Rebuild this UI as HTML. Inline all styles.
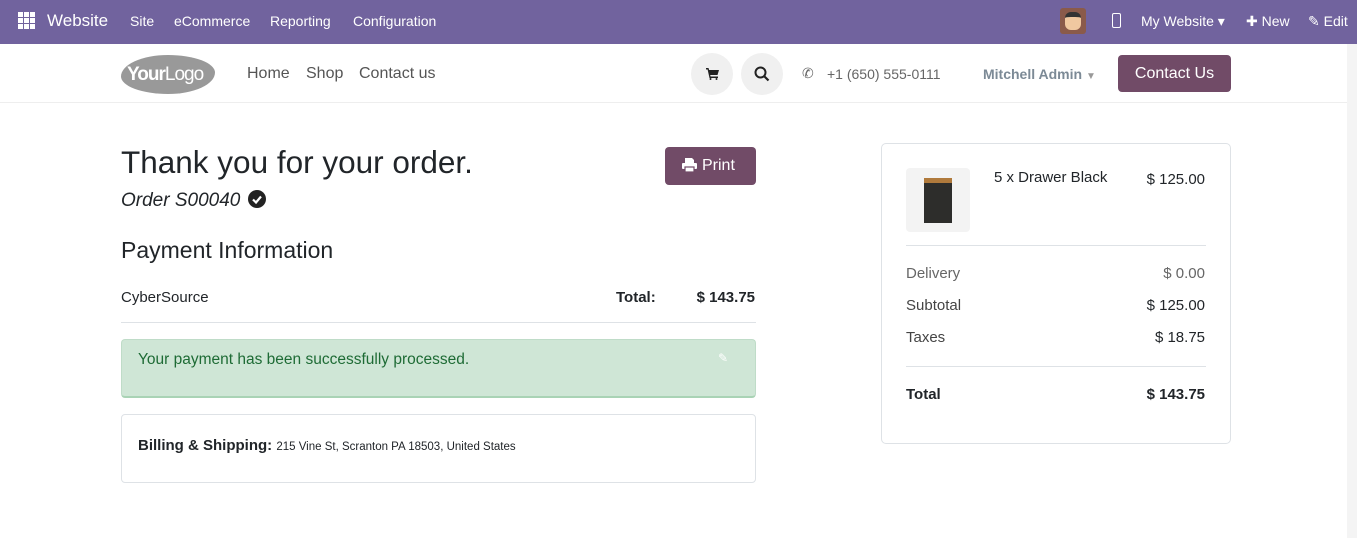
<!DOCTYPE html>
<html><head><meta charset="utf-8"><style>
*{box-sizing:border-box;margin:0;padding:0}
body{width:1357px;height:538px;overflow:hidden;background:#fff;font-family:"Liberation Sans",sans-serif;color:#212529;position:relative}
.abs{position:absolute;white-space:nowrap}
.r{position:absolute;white-space:nowrap;text-align:right}
.top{position:absolute;left:0;top:0;width:1357px;height:44px;background:#71639e;color:#fff}
.top .abs{font-size:14px;top:13px}
.nav{position:absolute;left:0;top:44px;width:1347px;height:59px;background:#fff;border-bottom:1px solid #eee}
.scroll{position:absolute;left:1347px;top:44px;width:10px;height:494px;background:#f4f4f4}
</style></head><body>
<div class="top">
 <svg class="abs" style="left:18px;top:12px" width="17" height="17" viewBox="0 0 17 17" fill="#fff"><rect x="0" y="0" width="5" height="5"/><rect x="6" y="0" width="5" height="5"/><rect x="12" y="0" width="5" height="5"/><rect x="0" y="6" width="5" height="5"/><rect x="6" y="6" width="5" height="5"/><rect x="12" y="6" width="5" height="5"/><rect x="0" y="12" width="5" height="5"/><rect x="6" y="12" width="5" height="5"/><rect x="12" y="12" width="5" height="5"/></svg>
 <div class="abs" style="left:47px;top:11px;font-size:17px">Website</div>
 <div class="abs" style="left:130px">Site</div>
 <div class="abs" style="left:174px">eCommerce</div>
 <div class="abs" style="left:270px">Reporting</div>
 <div class="abs" style="left:353px">Configuration</div>
 <div class="abs" style="left:1060px;top:8px;width:26px;height:26px;background:#8a5a4a;border-radius:3px"><div style="margin:4px 5px;width:16px;height:18px;background:#f0c8a0;border-radius:6px;border-top:5px solid #333"></div></div>
 <div class="abs" style="left:1112px;top:13px;width:9px;height:15px;border:1.5px solid #fff;border-radius:2px"></div>
 <div class="abs" style="left:1141px">My Website ▾</div>
 <div class="abs" style="left:1246px">✚ New</div>
 <div class="abs" style="left:1308px">✎ Edit</div>
</div>
<div class="nav">
 <div class="abs" style="left:121px;top:11px;width:94px;height:39px;background:#999;border-radius:50% 50% 50% 50%/55% 45% 55% 45%;color:#fff;font-size:19px;line-height:39px;padding-left:6px;letter-spacing:-1px"><b>Your</b>Logo</div>
 <div class="abs" style="left:247px;top:21px;font-size:16px;color:#555">Home</div>
 <div class="abs" style="left:306px;top:21px;font-size:16px;color:#555">Shop</div>
 <div class="abs" style="left:359px;top:21px;font-size:16px;color:#555">Contact us</div>
 <div class="abs" style="left:691px;top:9px;width:42px;height:42px;border-radius:50%;background:#f0f0f0"><svg style="margin:15px 0 0 15px" width="13" height="12" viewBox="0 0 13 12" fill="#222"><path d="M0 0h2.5l.6 2H13l-1.5 5H4.2l.4 1.5H12V10H3.5L1.6 1.5H0z"/><circle cx="4.5" cy="11" r="1"/><circle cx="10.5" cy="11" r="1"/></svg></div>
 <div class="abs" style="left:741px;top:9px;width:42px;height:42px;border-radius:50%;background:#f0f0f0"><svg style="margin:13px" width="16" height="16" viewBox="0 0 16 16"><circle cx="6.5" cy="6.5" r="5" fill="none" stroke="#222" stroke-width="2"/><path d="M10 10l4.5 4.5" stroke="#222" stroke-width="2.2"/></svg></div>
 <div class="abs" style="left:802px;top:21px;font-size:14px;color:#666">✆</div>
 <div class="abs" style="left:827px;top:22px;font-size:14px;color:#666">+1 (650) 555-0111</div>
 <div class="abs" style="left:983px;top:22px;font-size:14px;color:#7c8a96;font-weight:bold">Mitchell Admin <span style="font-size:10px;color:#999">▼</span></div>
 <div class="abs" style="left:1118px;top:11px;width:113px;height:37px;background:#714b67;border-radius:4px;color:#fff;font-size:16px;text-align:center;line-height:37px">Contact Us</div>
</div>
<div class="scroll"></div>

<div class="abs" style="left:121px;top:144px;font-size:31.5px">Thank you for your order.</div>
<div class="abs" style="left:121px;top:190px;font-size:19px;font-style:italic">Order S00040 <svg style="vertical-align:-2px;margin-left:2px" width="18" height="18" viewBox="0 0 18 18"><circle cx="9" cy="9" r="9" fill="#222"/><path d="M5 9.5l3 3 5-6" stroke="#fff" stroke-width="2.2" fill="none"/></svg></div>
<div class="abs" style="left:665px;top:147px;width:91px;height:38px;background:#714b67;border-radius:4px;color:#fff;font-size:16px;line-height:38px;padding-left:17px"><svg style="vertical-align:-2px;margin-right:5px" width="15" height="14" viewBox="0 0 15 14" fill="#fff"><path d="M3 0h7l2 2v3H3z"/><rect x="0" y="5" width="15" height="6" rx="1"/><rect x="3" y="9" width="9" height="5" fill="#fff" stroke="#714b67" stroke-width="1.2"/></svg>Print</div>
<div class="abs" style="left:121px;top:237px;font-size:23px">Payment Information</div>
<div class="abs" style="left:121px;top:289px;font-size:15px">CyberSource</div>
<div class="abs" style="left:616px;top:289px;font-size:15px;font-weight:bold">Total:</div>
<div class="r" style="right:602px;top:289px;font-size:15px;font-weight:bold">$ 143.75</div>
<div class="abs" style="left:121px;top:322px;width:635px;height:1px;background:#dee2e6"></div>
<div class="abs" style="left:121px;top:339px;width:635px;height:59px;background:#cfe6d6;border:1px solid #bfdcc8;border-bottom:2px solid #a9d3b5;border-radius:4px"></div>
<div class="abs" style="left:138px;top:351px;font-size:15.5px;color:#1e6b35">Your payment has been successfully processed.</div>
<div class="abs" style="left:718px;top:351px;font-size:12px;color:#fff">✎</div>
<div class="abs" style="left:121px;top:414px;width:635px;height:69px;border:1px solid #dee2e6;border-radius:4px"></div>
<div class="abs" style="left:138px;top:437px;font-size:15px;font-weight:bold">Billing &amp; Shipping: <span style="font-size:11.5px;font-weight:normal">215 Vine St, Scranton PA 18503, United States</span></div>

<div class="abs" style="left:881px;top:143px;width:350px;height:301px;border:1px solid #dee2e6;border-radius:5px"></div>
<div class="abs" style="left:906px;top:168px;width:64px;height:64px;background:#f3f3f3;border-radius:4px"><div style="position:absolute;left:18px;top:10px;width:28px;height:5px;background:#b07a3c"></div><div style="position:absolute;left:18px;top:15px;width:28px;height:40px;background:#2d2d2b"></div></div>
<div class="abs" style="left:994px;top:169px;font-size:15px">5 x Drawer Black</div>
<div class="r" style="right:152px;top:171px;font-size:15px">$ 125.00</div>
<div class="abs" style="left:906px;top:245px;width:300px;height:1px;background:#dee2e6"></div>
<div class="abs" style="left:906px;top:265px;font-size:15px;color:#666">Delivery</div>
<div class="r" style="right:152px;top:265px;font-size:15px;color:#666">$ 0.00</div>
<div class="abs" style="left:906px;top:297px;font-size:15px;color:#444">Subtotal</div>
<div class="r" style="right:152px;top:297px;font-size:15px">$ 125.00</div>
<div class="abs" style="left:906px;top:329px;font-size:15px;color:#444">Taxes</div>
<div class="r" style="right:152px;top:329px;font-size:15px">$ 18.75</div>
<div class="abs" style="left:906px;top:366px;width:300px;height:1px;background:#dee2e6"></div>
<div class="abs" style="left:906px;top:386px;font-size:15px;font-weight:bold">Total</div>
<div class="r" style="right:152px;top:386px;font-size:15px;font-weight:bold">$ 143.75</div>
</body></html>
